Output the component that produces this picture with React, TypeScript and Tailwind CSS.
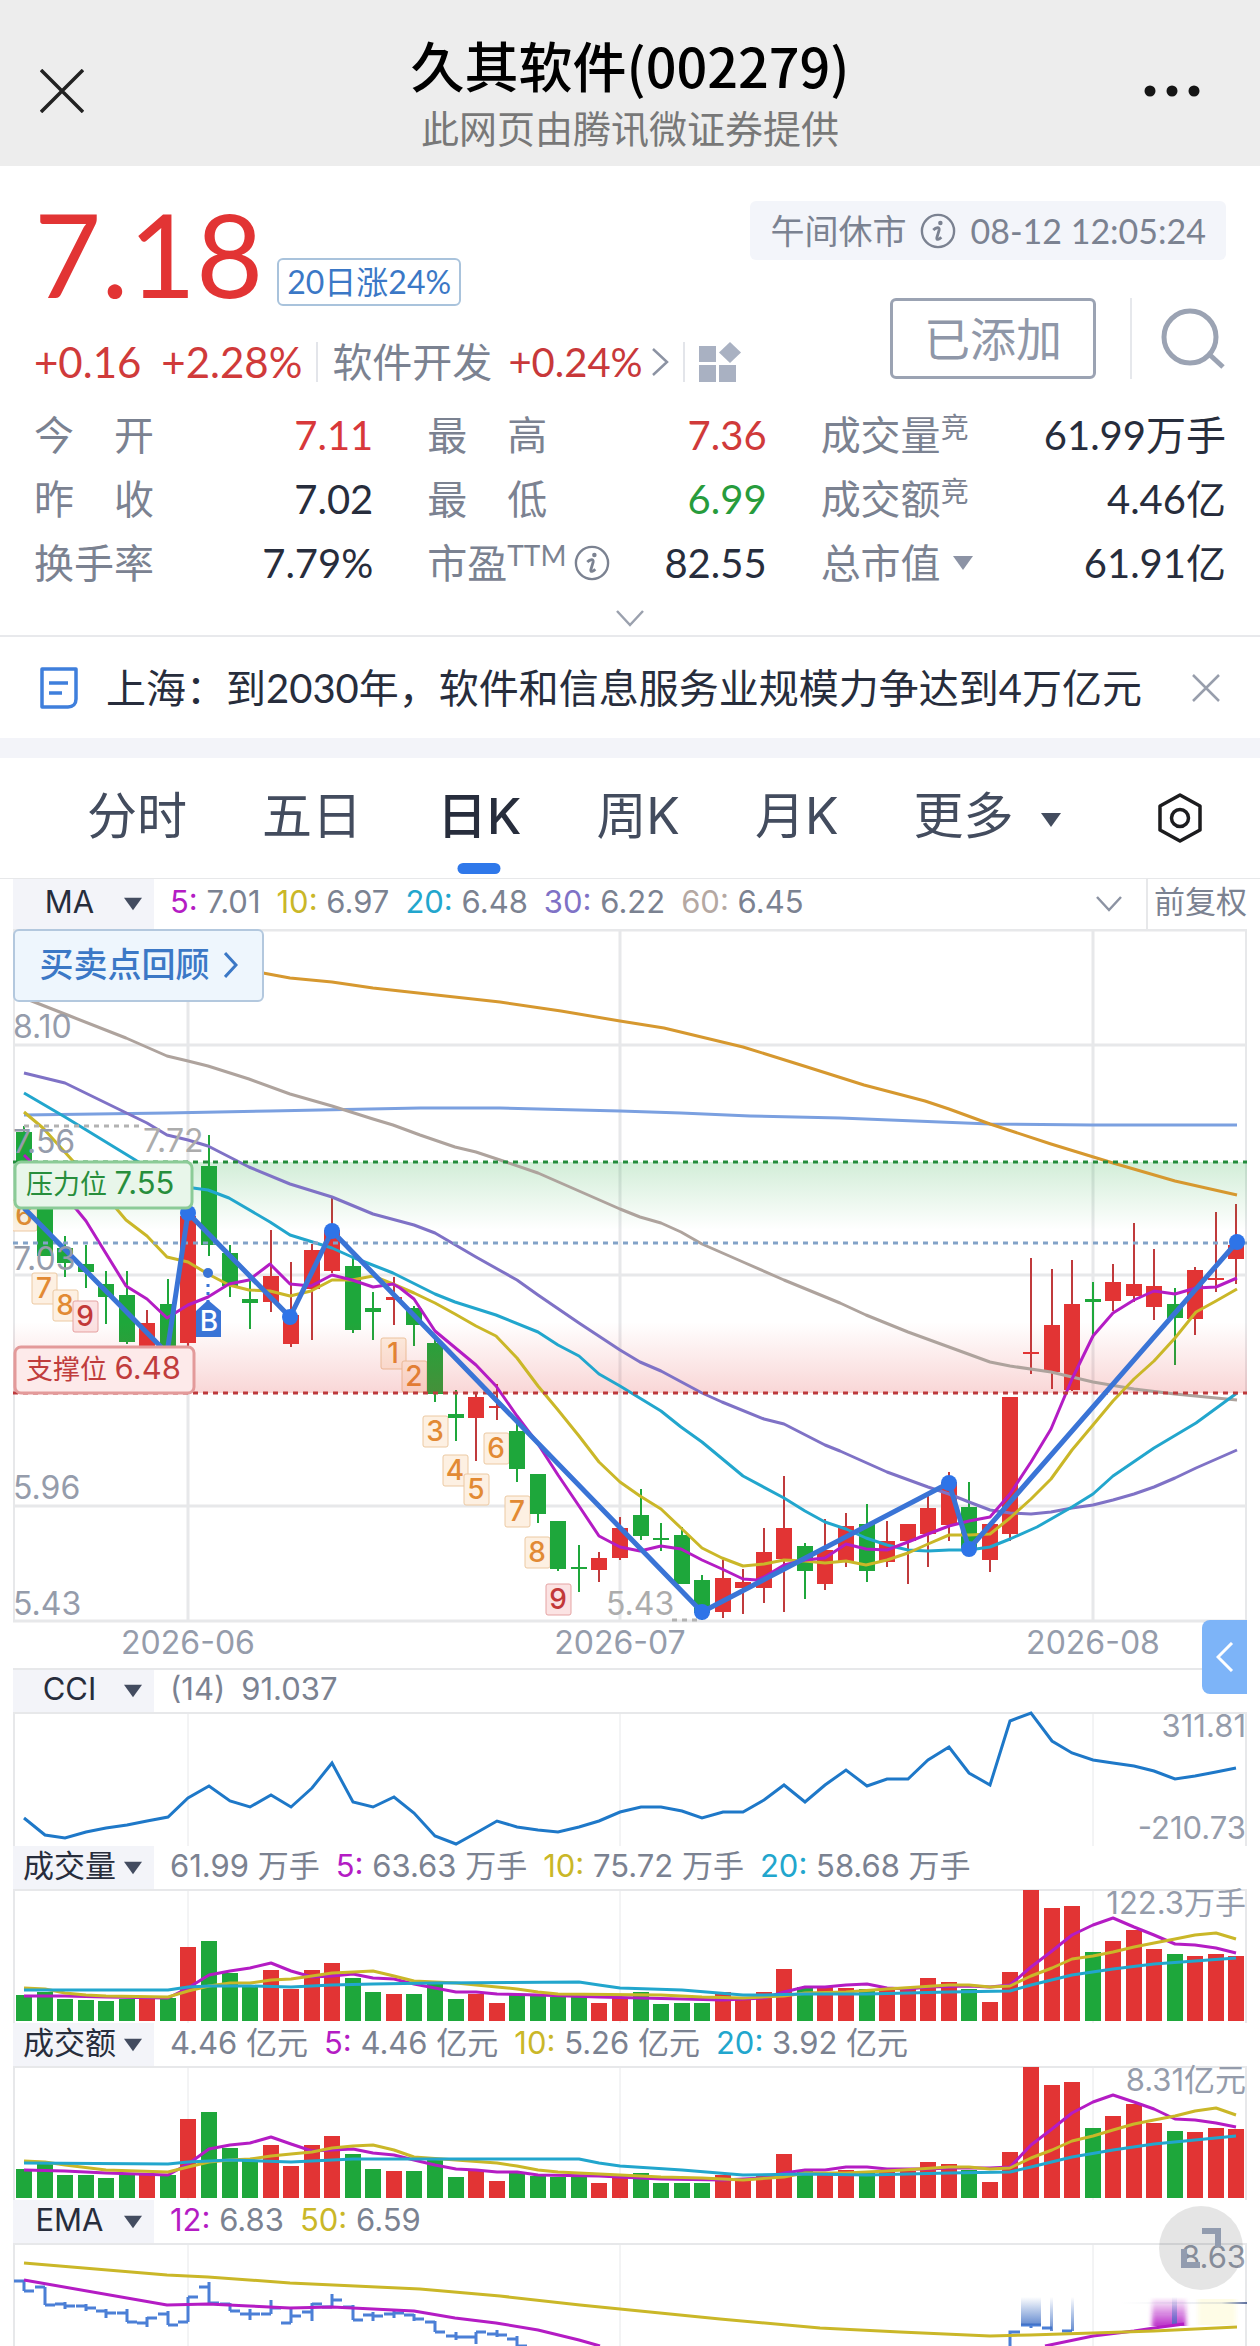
import type { ReactNode } from 'react'
import { clsx } from 'clsx'

const RED = '#e23434'
const GREEN = '#1ea73b'
const MAGENTA = '#b41cc4'
const YELLOW = '#cab728'
const CYAN = '#22a6cd'
const GRID = '#e7e8ea'

type Point = [number, number]

// [rising, high, body top, body bottom, low]
const candles: [number, number, number, number, number][] = [
  [0, 1126, 1132, 1175, 1180], [0, 1187, 1190, 1256, 1256], [0, 1236, 1248, 1263, 1277],
  [0, 1245, 1264, 1272, 1288], [0, 1271, 1284, 1297, 1324], [0, 1271, 1295, 1342, 1344],
  [1, 1310, 1323, 1350, 1350], [0, 1279, 1304, 1350, 1350], [1, 1210, 1216, 1343, 1346],
  [0, 1135, 1166, 1245, 1256], [0, 1245, 1253, 1286, 1297], [0, 1281, 1299, 1303, 1329],
  [1, 1230, 1276, 1302, 1312], [1, 1262, 1315, 1344, 1347], [1, 1244, 1250, 1289, 1340],
  [1, 1197, 1230, 1271, 1273], [0, 1256, 1266, 1330, 1333], [0, 1292, 1308, 1312, 1340],
  [1, 1277, 1297, 1300, 1325], [0, 1306, 1308, 1325, 1346], [0, 1339, 1343, 1394, 1402],
  [0, 1390, 1414, 1418, 1441], [1, 1393, 1397, 1418, 1461], [1, 1384, 1406, 1408, 1420],
  [0, 1418, 1431, 1469, 1482], [0, 1474, 1474, 1514, 1523], [0, 1521, 1521, 1569, 1571],
  [0, 1545, 1567, 1569, 1592], [1, 1552, 1558, 1570, 1582], [1, 1517, 1528, 1558, 1560],
  [0, 1489, 1515, 1536, 1540], [0, 1523, 1538, 1540, 1551], [0, 1527, 1535, 1584, 1584],
  [0, 1575, 1580, 1613, 1620], [1, 1560, 1578, 1612, 1618], [1, 1569, 1582, 1588, 1614],
  [1, 1528, 1552, 1588, 1603], [1, 1476, 1528, 1559, 1612], [0, 1543, 1546, 1571, 1599],
  [1, 1519, 1550, 1584, 1590], [1, 1513, 1526, 1561, 1567], [0, 1504, 1524, 1571, 1582],
  [1, 1521, 1541, 1562, 1567], [1, 1524, 1524, 1541, 1584], [1, 1494, 1508, 1534, 1567],
  [1, 1472, 1482, 1525, 1541], [0, 1482, 1507, 1548, 1552], [1, 1522, 1524, 1560, 1572],
  [1, 1397, 1397, 1534, 1541], [1, 1258, 1352, 1354, 1374], [1, 1269, 1325, 1372, 1389],
  [1, 1260, 1304, 1390, 1391], [0, 1282, 1299, 1302, 1338], [1, 1264, 1282, 1301, 1311],
  [1, 1223, 1284, 1296, 1302], [1, 1249, 1286, 1307, 1320], [0, 1288, 1304, 1318, 1365],
  [1, 1267, 1270, 1319, 1335], [1, 1212, 1278, 1280, 1292], [1, 1204, 1245, 1259, 1284],
]

const priceLines = [
  {
    color: '#7ba0e0',
    points: '24,1115 167,1113 270,1111 420,1108 500,1108 620,1111 681,1113 750,1116 840,1118 990,1124 1092,1125 1237,1125',
  },
  {
    color: '#d6982f',
    points: '24,930 263,973 290,978 332,982 373,988 400,991 500,1002 561,1011 620,1021 664,1028 743,1047 804,1066 864,1085 925,1101 949,1109 990,1124 1051,1144 1113,1163 1175,1181 1237,1195',
  },
  {
    color: '#aea39d',
    points: '24,998 70,1016 126,1038 167,1056 188,1061 208,1066 249,1079 290,1094 332,1106 373,1119 393,1125 420,1135 455,1147 476,1152 503,1161 538,1173 579,1191 620,1209 640,1217 661,1223 681,1232 702,1244 743,1262 784,1280 840,1303 866,1315 908,1332 949,1347 990,1362 1010,1366 1051,1372 1093,1382 1134,1389 1175,1394 1237,1400',
  },
  {
    color: '#7f72c6',
    points: '24,1073 65,1083 147,1123 167,1135 188,1140 208,1146 249,1167 290,1184 332,1197 373,1214 414,1225 435,1233 476,1257 517,1280 538,1295 579,1323 620,1350 640,1362 661,1371 702,1393 722,1402 764,1419 784,1424 825,1445 840,1451 887,1472 928,1487 949,1494 969,1502 990,1510 1010,1513 1031,1514 1051,1512 1072,1508 1093,1505 1113,1500 1134,1494 1154,1487 1175,1478 1196,1468 1237,1450',
  },
  {
    color: CYAN,
    points: '24,1093 65,1117 137,1161 193,1188 208,1190 229,1198 270,1222 290,1235 332,1248 352,1257 393,1273 435,1294 455,1302 496,1315 538,1332 558,1345 579,1356 599,1374 620,1386 661,1411 681,1427 702,1442 743,1476 784,1498 805,1511 825,1522 846,1529 866,1538 887,1545 908,1550 928,1551 949,1550 969,1550 990,1547 1010,1539 1037,1527 1072,1507 1093,1494 1113,1476 1154,1448 1196,1423 1237,1393',
  },
  {
    color: YELLOW,
    points: '24,1112 43,1128 72,1160 115,1207 126,1220 147,1236 167,1257 188,1262 208,1274 229,1285 249,1290 270,1291 290,1296 311,1291 332,1280 352,1280 373,1276 393,1284 414,1293 435,1303 455,1314 476,1326 496,1336 517,1358 538,1386 558,1410 579,1436 599,1462 620,1482 640,1496 661,1509 681,1528 702,1548 722,1558 743,1566 764,1564 784,1560 805,1561 825,1563 846,1561 866,1565 887,1560 908,1553 928,1544 949,1535 969,1535 990,1534 1010,1518 1031,1499 1051,1479 1072,1450 1093,1425 1113,1401 1134,1379 1154,1361 1175,1338 1196,1312 1216,1301 1237,1289',
  },
  {
    color: MAGENTA,
    points: '24,1155 32,1163 77,1210 86,1221 126,1286 147,1299 167,1318 188,1305 208,1297 229,1284 249,1280 270,1264 290,1284 311,1286 332,1275 352,1280 373,1287 393,1284 400,1288 414,1299 435,1331 476,1365 496,1386 517,1416 538,1444 558,1475 579,1506 599,1536 620,1547 640,1551 661,1546 681,1549 702,1560 722,1569 743,1579 757,1580 764,1577 784,1565 805,1560 825,1558 846,1544 866,1549 887,1550 908,1542 928,1534 949,1526 969,1521 990,1517 1010,1494 1031,1462 1051,1429 1072,1379 1093,1336 1113,1313 1134,1300 1154,1291 1175,1294 1196,1288 1216,1287 1237,1278',
  },
]

const swings: Point[] = [[188, 1213], [290, 1317], [332, 1231], [702, 1612], [949, 1483], [969, 1549], [1237, 1242]]

// nine-turn counters under the candles
const counters: [string, number, number][] = [
  ['6', 24, 1215], ['7', 44, 1288], ['8', 65, 1305], ['9', 85, 1316],
  ['1', 393, 1353], ['2', 414, 1376], ['3', 435, 1431], ['4', 455, 1470], ['5', 476, 1489],
  ['6', 496, 1448], ['7', 517, 1511], ['8', 537, 1552], ['9', 558, 1599],
]

const cci = [
  106, 123, 126, 120, 116, 113, 109, 105, 86, 74, 89, 95, 83, 95, 76, 51, 90, 95, 85, 101,
  124, 132, 121, 109, 115, 118, 120, 115, 109, 100, 95, 95, 99, 106, 100, 100, 88, 73, 90, 73,
  58, 74, 67, 67, 48, 35, 61, 73, 9, 1, 29, 41, 48, 51, 54, 59, 67, 64, 60, 56,
]

const volumeBars = [
  26, 29, 22, 21, 20, 22, 22, 23, 74, 80, 48, 34, 51, 32, 51, 58, 43, 29, 27, 27,
  37, 22, 27, 18, 26, 25, 24, 24, 18, 23, 29, 17, 18, 18, 29, 21, 29, 52, 34, 34,
  33, 32, 31, 32, 43, 39, 32, 19, 49, 131, 113, 115, 69, 80, 91, 72, 67, 65, 67, 65,
]

const volumeLines: { color: string; points: Point[] }[] = [
  {
    color: MAGENTA,
    points: [[0, 107], [2, 107], [4, 108], [7, 109], [8, 99], [9, 86], [10, 82], [11, 79], [12, 74], [13, 82], [14, 88], [15, 87], [16, 85], [17, 89], [18, 90], [19, 95], [20, 99], [21, 103], [22, 103], [23, 105], [25, 106], [28, 108], [30, 109], [34, 111], [36, 109], [37, 103], [38, 98], [39, 98], [40, 96], [41, 95], [42, 99], [43, 100], [44, 98], [46, 97], [47, 98], [48, 96], [49, 78], [50, 62], [51, 46], [52, 36], [53, 29], [54, 38], [55, 46], [56, 55], [57, 56], [58, 59], [59, 64]],
  },
  {
    color: YELLOW,
    points: [[0, 99], [1, 100], [2, 104], [3, 106], [4, 107], [7, 108], [8, 102], [9, 97], [10, 94], [11, 94], [12, 91], [13, 90], [14, 87], [15, 84], [16, 83], [17, 82], [18, 87], [19, 92], [20, 93], [21, 94], [22, 96], [23, 98], [24, 100], [25, 103], [26, 105], [31, 106], [33, 108], [35, 109], [37, 107], [38, 104], [40, 103], [42, 100], [45, 96], [46, 96], [47, 98], [48, 97], [49, 87], [50, 79], [51, 70], [52, 67], [53, 63], [54, 58], [55, 54], [56, 50], [57, 46], [58, 44], [59, 50]],
  },
  {
    color: CYAN,
    points: [[0, 101], [7, 101], [8, 98], [9, 97], [11, 97], [13, 98], [15, 96], [17, 95], [20, 94], [27, 93], [28, 96], [29, 99], [32, 101], [35, 106], [36, 106], [38, 105], [41, 105], [45, 103], [48, 102], [49, 96], [51, 86], [53, 80], [55, 75], [57, 72], [59, 69]],
  },
]

const amountBars = [
  29, 35, 23, 23, 20, 24, 23, 23, 79, 86, 50, 38, 53, 32, 53, 62, 44, 29, 27, 27,
  38, 21, 28, 17, 25, 22, 21, 21, 15, 20, 25, 15, 15, 15, 23, 18, 22, 44, 27, 26,
  28, 27, 26, 27, 36, 34, 28, 16, 46, 131, 113, 116, 70, 82, 94, 75, 67, 66, 70, 69,
]

const amountLines: { color: string; points: Point[] }[] = [
  {
    color: MAGENTA,
    points: [[0, 104], [2, 105], [4, 107], [7, 109], [8, 98], [9, 83], [10, 79], [11, 77], [12, 71], [13, 78], [14, 85], [15, 84], [16, 83], [17, 87], [18, 89], [19, 94], [20, 99], [21, 103], [22, 104], [23, 106], [24, 106], [25, 109], [28, 110], [31, 113], [34, 114], [36, 112], [37, 107], [38, 104], [39, 104], [40, 101], [41, 101], [42, 103], [44, 103], [45, 102], [47, 102], [48, 101], [49, 79], [50, 63], [51, 47], [52, 36], [53, 29], [54, 36], [55, 43], [56, 53], [57, 54], [58, 57], [59, 61]],
  },
  {
    color: YELLOW,
    points: [[0, 95], [1, 96], [2, 99], [4, 104], [7, 106], [8, 101], [9, 96], [10, 94], [11, 93], [12, 90], [13, 88], [14, 86], [15, 82], [16, 80], [17, 79], [18, 84], [19, 91], [21, 94], [23, 97], [24, 100], [25, 104], [26, 106], [29, 109], [31, 111], [33, 112], [35, 114], [37, 111], [38, 107], [40, 107], [42, 105], [45, 101], [46, 101], [47, 103], [48, 102], [49, 92], [50, 84], [51, 75], [52, 70], [53, 64], [54, 58], [55, 54], [56, 50], [57, 45], [58, 42], [59, 49]],
  },
  {
    color: CYAN,
    points: [[0, 97], [7, 98], [8, 96], [10, 94], [13, 96], [16, 93], [27, 93], [28, 97], [29, 100], [32, 104], [35, 109], [38, 108], [41, 109], [45, 107], [48, 106], [49, 101], [51, 91], [53, 84], [55, 78], [57, 74], [59, 70]],
  },
]

// [open, high, low, close] for the EMA panel
const emaBars = [
  [38, 37, 48, 48], [44, 44, 62, 62], [61, 59, 66, 63], [63, 61, 68, 65], [68, 66, 75, 70],
  [70, 66, 79, 79], [80, 74, 84, 75], [71, 68, 82, 82], [79, 54, 79, 54], [44, 39, 60, 60],
  [61, 60, 68, 68], [71, 66, 77, 71], [71, 57, 71, 65], [80, 64, 80, 73], [69, 60, 78, 61],
  [64, 51, 65, 57], [64, 62, 77, 77], [72, 69, 78, 73], [71, 67, 75, 70], [72, 71, 78, 76],
  [79, 78, 89, 89], [93, 89, 97, 94], [94, 89, 101, 89], [91, 87, 94, 92], [96, 93, 103, 103],
]

const x = (i: number) => Math.round(24 + i * 20.55)
const toPoints = (list: Point[]) => list.map(([i, y]) => `${x(i)},${y}`).join(' ')

function Triangle({ className }: { className: string }) {
  return (
    <svg viewBox="0 0 20 14" className={clsx('pointer-events-none absolute top-1/2 -translate-y-1/2 fill-current', className)}>
      <path d="M0 0H20L10 14Z" />
    </svg>
  )
}

function InfoIcon() {
  return (
    <svg viewBox="0 0 38 38" className="h-9 w-9 shrink-0" fill="none" stroke="currentColor" strokeWidth="2.5">
      <circle cx="19" cy="19" r="17" />
      <circle cx="21.500" cy="10.500" r="2.400" fill="currentColor" stroke="none" />
      <path d="M14 18C17 15 21 14.500 20.200 18L17.800 26C17.200 29 20 28 22.500 25.500" strokeWidth="3" />
    </svg>
  )
}

function IndicatorSelect({ name, options }: { name: string; options: string[] }) {
  return (
    <div className="relative w-[141px] shrink-0 self-stretch bg-[#f3f4f9] text-[#434c60]">
      <select aria-label={name} className="block h-full w-full appearance-none pr-7 pb-1 text-center text-[31px] leading-9 text-[#272d3c]">
        {options.map((o) => (
          <option key={o}>{o}</option>
        ))}
      </select>
      <Triangle className="right-3 h-3.5 w-[18px]" />
    </div>
  )
}

function Legend({ items }: { items: { label?: string; value: string; tone?: string }[] }) {
  return (
    <div className="flex items-center gap-4 pb-1 pl-4 text-[31px] leading-9 whitespace-nowrap text-[#7b8291]">
      {items.map((item) => (
        <span key={item.label ?? item.value}>
          {item.label && <span className={item.tone}>{item.label}: </span>}
          {item.value}
        </span>
      ))}
    </div>
  )
}

function PanelHead({ children }: { children: ReactNode }) {
  return <div className="flex h-[43px] items-center">{children}</div>
}

function PanelGrid({ height }: { height: number }) {
  return (
    <g stroke={GRID} strokeWidth="2">
      <path d={`M13 1H1247M14 0V${height}M1246 0V${height}`} />
      <path d={`M188 0V${height}M620 0V${height}M1093 0V${height}`} strokeWidth="1" />
    </g>
  )
}

function PriceChart() {
  return (
    <svg viewBox="13 929 1234 739" className="block w-full" role="img" aria-label="日K">
      <defs>
        <linearGradient id="pressure" x1="0" y1="0" x2="0" y2="1">
          <stop offset="0" stopColor="#1ea73b" stopOpacity="0.2" />
          <stop offset="1" stopColor="#1ea73b" stopOpacity="0" />
        </linearGradient>
        <linearGradient id="support" x1="0" y1="0" x2="0" y2="1">
          <stop offset="0" stopColor="#e23434" stopOpacity="0" />
          <stop offset="1" stopColor="#e23434" stopOpacity="0.2" />
        </linearGradient>
      </defs>

      <path
        d="M13 930H1247M13 1045H1247M13 1275H1247M13 1506H1247M13 1621H1247M188 930V1621M620 930V1621M1093 930V1621"
        stroke={GRID}
        strokeWidth="3"
      />
      <path d="M14 930V1621M1246 930V1621" stroke={GRID} strokeWidth="2" />

      {counters.map(([n, cx, cy]) => (
        <g key={`${n}-${cx}`}>
          <rect x={cx - 12} y={cy - 15} width="25" height="31" rx="2" fill={n === '9' ? '#fbe3e3' : '#fdf0e2'} stroke={n === '9' ? '#e5a3a3' : '#ecc9a2'} />
          <text x={cx} y={cy + 10} textAnchor="middle" fontSize="28" fontWeight="500" fill={n === '9' ? '#c23838' : '#e28a34'}>{n}</text>
        </g>
      ))}

      {candles.map(([up, high, top, bottom, low], i) => (
        <g key={i} fill={up ? RED : GREEN} stroke={up ? '#c03a3c' : GREEN}>
          <path d={`M${x(i)} ${high}V${low}`} strokeWidth="2" />
          <rect x={x(i) - 8} y={top} width="16" height={bottom - top} stroke="none" />
        </g>
      ))}

      <rect x="13" y="1162" width="1234" height="68" fill="url(#pressure)" />
      <rect x="13" y="1322" width="1234" height="71" fill="url(#support)" />

      {priceLines.map((l) => (
        <polyline key={l.color} points={l.points} fill="none" stroke={l.color} strokeWidth="3" strokeLinejoin="round" />
      ))}

      <g fill="none" strokeWidth="3" strokeDasharray="5 5">
        <path d="M13 1162H1247" stroke="#238c3c" />
        <path d="M13 1243H1247" stroke="#83a3c8" />
        <path d="M13 1393H1247" stroke="#bd3a3c" />
        <path d="M24 1126H144M672 1620H700" stroke="#b2b2b2" />
      </g>

      <polyline points="24,1208 167,1353 188,1213 290,1317 332,1231 702,1612 949,1483 969,1549 1237,1242" fill="none" stroke="#3a74d6" strokeWidth="5" strokeLinejoin="round" />
      {swings.map(([cx, cy]) => (
        <circle key={cx} cx={cx} cy={cy} r="8" fill="#2e74e8" />
      ))}

      {/* buy marker */}
      <circle cx="208" cy="1273" r="5" fill="#3a74d6" />
      <path d="M208 1284V1302" stroke="#3a74d6" strokeWidth="3" strokeDasharray="3 5" />
      <path d="M208 1300L221 1311V1337H196V1311Z" fill="#3a74d6" />
      <text x="209" y="1331" textAnchor="middle" fontSize="28" fontWeight="500" fill="#fff">B</text>

      <g fontSize="32" fill="#959cab">
        <text x="13" y="1038">8.10</text>
        <text x="13" y="1153">7.56</text>
        <text x="13" y="1270">7.03</text>
        <text x="13" y="1499">5.96</text>
        <text x="13" y="1615">5.43</text>
        <text x="143" y="1152" fill="#acacac">7.72</text>
        <text x="606" y="1615" fill="#acacac">5.43</text>
        <text x="188" y="1654" textAnchor="middle">2026-06</text>
        <text x="620" y="1654" textAnchor="middle">2026-07</text>
        <text x="1093" y="1654" textAnchor="middle">2026-08</text>
      </g>

      <g fontSize="27" strokeWidth="3">
        <rect x="15" y="1162" width="177" height="46" rx="6" fill="#e8f6ea" stroke="#8bcb97" />
        <text x="26" y="1194" fill="#278e3c">压力位 <tspan fontSize="31">7.55</tspan></text>
        <rect x="15" y="1347" width="179" height="46" rx="6" fill="#fdeaea" stroke="#e39a9a" />
        <text x="26" y="1379" fill="#c03c3c">支撑位 <tspan fontSize="31">6.48</tspan></text>
      </g>
    </svg>
  )
}

function CciChart() {
  return (
    <svg viewBox="13 0 1234 134" className="block w-full overflow-visible" role="img" aria-label="CCI">
      <PanelGrid height={134} />
      <polyline points={toPoints(cci.map((y, i) => [i, y]))} fill="none" stroke="#1e78c8" strokeWidth="3" />
      <g fontSize="31" fill="#959cab" textAnchor="end">
        <text x="1246" y="25">311.81</text>
        <text x="1246" y="127">-210.73</text>
      </g>
    </svg>
  )
}

function BarChart({ label, bars, lines, max }: { label: string; bars: number[]; lines: { color: string; points: Point[] }[]; max: string }) {
  return (
    <svg viewBox="13 0 1234 134" className="block w-full overflow-visible" role="img" aria-label={label}>
      <PanelGrid height={134} />
      {bars.map((h, i) => (
        <rect key={i} x={x(i) - 8} y={132 - h} width="16" height={h} fill={candles[i][0] ? RED : GREEN} />
      ))}
      {lines.map((l) => (
        <polyline key={l.color} points={toPoints(l.points)} fill="none" stroke={l.color} strokeWidth="3" strokeLinejoin="round" />
      ))}
      <text x="1246" y="25" fontSize="31" fill="#959cab" textAnchor="end">{max}</text>
    </svg>
  )
}

function EmaChart() {
  return (
    <svg viewBox="13 0 1234 103" className="block w-full overflow-visible" role="img" aria-label="EMA">
      <defs>
        <linearGradient id="blueFade" x1="0" y1="0" x2="0" y2="1">
          <stop offset="0" stopColor="#3f6fc4" stopOpacity="0" />
          <stop offset="1" stopColor="#3f6fc4" stopOpacity="0.8" />
        </linearGradient>
        <linearGradient id="magentaFade" x1="0" y1="0" x2="0" y2="1">
          <stop offset="0" stopColor="#b41cc4" stopOpacity="0" />
          <stop offset="1" stopColor="#b41cc4" stopOpacity="0.9" />
        </linearGradient>
        <linearGradient id="lineFade" x1="0" y1="0" x2="1" y2="0">
          <stop offset="0" stopColor="#5c6f9c" stopOpacity="0" />
          <stop offset="0.8" stopColor="#5c6f9c" stopOpacity="0.15" />
          <stop offset="1" stopColor="#5c6f9c" />
        </linearGradient>
        <filter id="soft" x="-20%" y="-5%" width="140%" height="110%">
          <feGaussianBlur stdDeviation="2 0" />
        </filter>
      </defs>
      <PanelGrid height={103} />
      <g stroke="#4b7fd6" strokeWidth="3" fill="none">
        {emaBars.map(([open, high, low, close], i) => (
          <path key={i} d={`M${x(i) - 10} ${open}H${x(i)}M${x(i)} ${high}V${low}M${x(i)} ${close}H${x(i) + 10}`} />
        ))}
        <path d="M1010 103V89H1020M1021 82H1041M1031 82V85M1042 85H1052M1062 88H1072" />
      </g>
      <rect x="1021" y="54" width="20" height="28" fill="url(#blueFade)" />
      <rect x="1050" y="54" width="3" height="34" fill="url(#blueFade)" />
      <rect x="1071" y="54" width="3" height="34" fill="url(#blueFade)" />
      <rect x="1152" y="54" width="34" height="29" fill="url(#magentaFade)" filter="url(#soft)" />
      <rect x="1172" y="54" width="5" height="28" fill="url(#blueFade)" />
      <rect x="1198" y="56" width="38" height="26" fill="#fdf9c8" opacity="0.45" filter="url(#soft)" />
      <rect x="1120" y="59" width="127" height="2" fill="url(#lineFade)" />
      <g fill="none" strokeWidth="3" strokeLinejoin="round">
        <polyline points="24,37 167,62 208,61 249,63 290,65 332,64 414,68 455,75 496,80 538,87 579,97 600,103" stroke={MAGENTA} />
        <polyline points="1045,103 1093,93 1134,88 1154,85 1184,81" stroke={MAGENTA} />
        <polyline points="24,20 167,32 208,34 290,40 420,46 500,53 580,62 640,68 720,76 820,85 900,89 990,93 1030,92 1093,90 1154,88 1237,84" stroke={YELLOW} />
      </g>
      <text x="1246" y="25" fontSize="31" fill="#959cab" textAnchor="end">8.63</text>
    </svg>
  )
}

function Stat({ label, value, tone = 'text-[#272d3c]' }: { label: ReactNode; value: string; tone?: string }) {
  return (
    <div className="flex h-16 items-center justify-between text-[40px] whitespace-nowrap">
      <dt className="flex items-center text-[#7b8291]">{label}</dt>
      <dd className={tone}>{value}</dd>
    </div>
  )
}

function Spaced({ a, b }: { a: string; b: string }) {
  return (
    <span className="flex w-[120px] justify-between">
      <span>{a}</span>
      <span>{b}</span>
    </span>
  )
}

function Raised({ children }: { children: string }) {
  return <sup className="static pb-4 text-[28px] leading-none">{children}</sup>
}

const tabs = ['分时', '五日', '日K', '周K', '月K']

export default function App() {
  return (
    <div className="w-full overflow-hidden bg-white font-['Inter','Noto_Sans_CJK_SC',sans-serif] text-[#272d3c]">
      <header className="grid h-[166px] grid-cols-[1fr_auto_1fr] items-center bg-[#ededed] px-10">
        <button aria-label="关闭" className="justify-self-start pt-4">
          <svg viewBox="0 0 44 44" className="h-11 w-11" stroke="#222" strokeWidth="3.5" fill="none">
            <path d="M1 1L43 43M43 1L1 43" />
          </svg>
        </button>
        <div className="pt-5 text-center font-['Noto_Sans_CJK_SC',sans-serif]">
          <h1 className="text-[54px] leading-[68px] font-medium text-black">久其软件(002279)</h1>
          <p className="text-[38px] leading-[56px] text-[#787878]">此网页由腾讯微证券提供</p>
        </div>
        <button aria-label="更多操作" className="justify-self-end pt-4 pr-5">
          <svg viewBox="0 0 56 12" className="h-3 w-14" fill="#151515">
            <circle cx="6" cy="6" r="5.500" />
            <circle cx="28" cy="6" r="5.500" />
            <circle cx="50" cy="6" r="5.500" />
          </svg>
        </button>
      </header>

      <section className="px-[34px] pt-[35px] font-['Lato','Noto_Sans_CJK_SC',sans-serif]">
        <div className="flex justify-between">
          <div>
            <div className="flex h-[105px] items-end gap-3.5">
              <span className="text-[116px] leading-[105px] text-[#e23434]">7.18</span>
              <span className="flex h-12 items-center rounded-md border-2 border-[#a9c3dc] px-2 text-[32px] text-[#3b78c6]">20日涨24%</span>
            </div>
            <div className="mt-[34px] flex h-11 items-center text-[42px] whitespace-nowrap">
              <span className="text-[#d03a3a]">+0.16</span>
              <span className="ml-5 text-[#d03a3a]">+2.28%</span>
              <a href="#sector" className="ml-3.5 flex items-center border-l-2 border-[#e3e5ea] pl-3.5 text-[40px] leading-10 text-[#7b8291]">
                软件开发
                <span className="ml-4 text-[#c8383a]">+0.24%</span>
                <svg viewBox="0 0 18 28" className="ml-2 h-7 w-[18px]" fill="none" stroke="#8c93a3" strokeWidth="2.500">
                  <path d="M2 1L16 14L2 27" />
                </svg>
              </a>
              <button aria-label="板块" className="ml-3.5 border-l-2 border-[#e3e5ea] pl-3.5">
                <svg viewBox="0 0 42 40" className="h-10 w-[42px]" fill="#a9b1c2">
                  <rect x="0" y="4" width="17" height="16" />
                  <path d="M31 0L42 10.500L31 21L20 10.500Z" />
                  <rect x="0" y="23" width="17" height="17" />
                  <rect x="20" y="23" width="17" height="17" />
                </svg>
              </button>
            </div>
          </div>

          <div className="flex flex-col items-end">
            <div className="flex h-[59px] items-center gap-3.5 rounded-md bg-[#f3f5fa] px-5 text-[34px] whitespace-nowrap text-[#7b8291]">
              午间休市
              <InfoIcon />
              <time>08-12 12:05:24</time>
            </div>
            <div className="mt-[38px] flex h-[81px] items-center">
              <button className="h-full w-[206px] rounded-md border-[3px] border-[#9ba3b3] text-[46px] text-[#8f97a8]">已添加</button>
              <span className="ml-[34px] h-full w-0.5 bg-[#e6e8ec]" />
              <button aria-label="搜索" className="ml-7">
                <svg viewBox="0 0 66 62" className="h-[62px] w-[66px]" fill="none" stroke="#9ba3b3" strokeWidth="5">
                  <circle cx="30" cy="29" r="26" />
                  <path d="M50 47L63 59" />
                </svg>
              </button>
            </div>
          </div>
        </div>

        <dl className="mt-[19px] grid grid-cols-[339fr_339fr_405fr] gap-x-[54px]">
          <Stat label={<Spaced a="今" b="开" />} value="7.11" tone="text-[#d8383a]" />
          <Stat label={<Spaced a="最" b="高" />} value="7.36" tone="text-[#d03a3a]" />
          <Stat label={<>成交量<Raised>竞</Raised></>} value="61.99万手" />
          <Stat label={<Spaced a="昨" b="收" />} value="7.02" />
          <Stat label={<Spaced a="最" b="低" />} value="6.99" tone="text-[#279c3c]" />
          <Stat label={<>成交额<Raised>竞</Raised></>} value="4.46亿" />
          <Stat label="换手率" value="7.79%" />
          <Stat label={<>市盈<Raised>TTM</Raised><span className="ml-2"><InfoIcon /></span></>} value="82.55" />
          <Stat
            label={
              <span className="relative text-[#8c93a5]">
                <select aria-label="市值" className="appearance-none pr-8 text-[#7b8291]">
                  <option>总市值</option>
                  <option>流通值</option>
                </select>
                <Triangle className="right-0 h-3.5 w-5" />
              </span>
            }
            value="61.91亿"
          />
        </dl>
        <button aria-label="展开" className="flex h-10 w-full items-center justify-center pt-1.5">
          <svg viewBox="0 0 28 18" className="h-[18px] w-7" fill="none" stroke="#9ba1ae" strokeWidth="2.500">
            <path d="M1 2L14 16L27 2" />
          </svg>
        </button>
      </section>

      <section className="flex h-[103px] items-center border-t-2 border-[#e8e9ec] px-10 font-['Lato','Noto_Sans_CJK_SC',sans-serif]">
        <svg viewBox="0 0 38 42" className="h-[42px] w-[38px] shrink-0" fill="none" stroke="#3f7fdc" strokeWidth="3.500">
          <path d="M2 2H36V32C36 37 33 40 28 40H2Z" strokeLinejoin="round" />
          <path d="M9 16H28M9 26H22" />
        </svg>
        <a href="#news" className="ml-7 min-w-0 flex-1 truncate text-[40px]">上海：到2030年，软件和信息服务业规模力争达到4万亿元</a>
        <button aria-label="关闭资讯" className="ml-4">
          <svg viewBox="0 0 28 28" className="h-7 w-7" fill="none" stroke="#989eac" strokeWidth="2.500">
            <path d="M1 1L27 27M27 1L1 27" />
          </svg>
        </button>
      </section>
      <div className="h-5 bg-[#f3f4f9]" />

      <nav className="flex h-[121px] items-start border-b border-[#e7e8ea] pr-[58px] pl-[87px] text-[50px] text-[#434c5e]">
        <div className="flex gap-[75px]">
          {tabs.map((t) => (
            <button key={t} className={clsx('relative h-[116px]', t === '日K' && 'font-medium text-[#272d3c]')}>
              {t}
              {t === '日K' && <span className="absolute bottom-0 left-1/2 h-[11px] w-[43px] -translate-x-1/2 rounded-full bg-[#2f78ea]" />}
            </button>
          ))}
          <div className="relative h-[116px]">
            <select aria-label="更多周期" className="h-full appearance-none pr-12">
              <option>更多</option>
              <option>5分</option>
            </select>
            <Triangle className="right-0 mt-1 h-3.5 w-[22px]" />
          </div>
        </div>
        <button aria-label="设置" className="ml-auto h-[120px]">
          <svg viewBox="0 0 44 50" className="h-[50px] w-11" fill="none" stroke="#1c1c1e" strokeWidth="3.500">
            <path d="M22 2L42 13V37L22 48L2 37V13Z" strokeLinejoin="round" />
            <circle cx="22" cy="25" r="8.500" />
          </svg>
        </button>
      </nav>

      <main className="relative px-[13px]">
        <div className="flex h-[50px] items-center">
          <IndicatorSelect name="主图指标" options={['MA', 'BOLL']} />
          <Legend
            items={[
              { label: '5', value: '7.01', tone: 'text-[#b41cc4]' },
              { label: '10', value: '6.97', tone: 'text-[#cab728]' },
              { label: '20', value: '6.48', tone: 'text-[#22a6cd]' },
              { label: '30', value: '6.22', tone: 'text-[#7f72c6]' },
              { label: '60', value: '6.45', tone: 'text-[#b5a8a2]' },
            ]}
          />
          <button aria-label="展开均线" className="ml-auto">
            <svg viewBox="0 0 26 16" className="h-4 w-[26px]" fill="none" stroke="#8c93a3" strokeWidth="2.500">
              <path d="M1 1L13 14L25 1" />
            </svg>
          </button>
          <button className="ml-6 h-full border-l-2 border-[#e7e8ea] pb-1 pl-1.5 text-[31px] text-[#7b8291]">前复权</button>
        </div>

        <div className="relative">
          <PriceChart />
          <button className="absolute top-0 left-0 flex h-[73px] w-[251px] items-center justify-center gap-3.5 rounded-md border-2 border-[#b3c8de] bg-[#eef6fd] pb-0.5 text-[34px] font-medium text-[#3b78c6]">
            买卖点回顾
            <svg viewBox="0 0 14 26" className="h-[26px] w-3.5" fill="none" stroke="currentColor" strokeWidth="3">
              <path d="M1 1L12 13L1 25" />
            </svg>
          </button>
          <button aria-label="展开侧栏" className="absolute right-0 -bottom-[26px] flex h-[74px] w-[45px] items-center justify-center rounded-l-lg bg-[#7db4f8]">
            <svg viewBox="0 0 18 30" className="h-[30px] w-[18px]" fill="none" stroke="#fff" strokeWidth="3">
              <path d="M16 1L2 15L16 29" />
            </svg>
          </button>
        </div>

        <div className="flex h-11 items-center border-t-2 border-[#e7e8ea]">
          <IndicatorSelect name="副图一" options={['CCI', 'MACD']} />
          <Legend items={[{ value: '(14)' }, { value: '91.037' }]} />
        </div>
        <CciChart />

        <PanelHead>
          <IndicatorSelect name="副图二" options={['成交量', 'KDJ']} />
          <Legend
            items={[
              { value: '61.99 万手' },
              { label: '5', value: '63.63 万手', tone: 'text-[#b41cc4]' },
              { label: '10', value: '75.72 万手', tone: 'text-[#cab728]' },
              { label: '20', value: '58.68 万手', tone: 'text-[#22a6cd]' },
            ]}
          />
        </PanelHead>
        <BarChart label="成交量" bars={volumeBars} lines={volumeLines} max="122.3万手" />

        <PanelHead>
          <IndicatorSelect name="副图三" options={['成交额', 'RSI']} />
          <Legend
            items={[
              { value: '4.46 亿元' },
              { label: '5', value: '4.46 亿元', tone: 'text-[#b41cc4]' },
              { label: '10', value: '5.26 亿元', tone: 'text-[#cab728]' },
              { label: '20', value: '3.92 亿元', tone: 'text-[#22a6cd]' },
            ]}
          />
        </PanelHead>
        <BarChart label="成交额" bars={amountBars} lines={amountLines} max="8.31亿元" />

        <div className="relative">
          <PanelHead>
            <IndicatorSelect name="副图四" options={['EMA', 'WR']} />
            <Legend
              items={[
                { label: '12', value: '6.83', tone: 'text-[#b41cc4]' },
                { label: '50', value: '6.59', tone: 'text-[#cab728]' },
              ]}
            />
          </PanelHead>
          <EmaChart />
          <button aria-label="全屏" className="absolute top-1.5 right-1 flex size-[84px] items-center justify-center rounded-full bg-black/10">
            <svg viewBox="0 0 42 42" className="h-[42px] w-[42px]" fill="none" stroke="#929caf" strokeWidth="6">
              <path d="M22 4H38V20M4 22V38H20" />
            </svg>
          </button>
        </div>
      </main>
    </div>
  )
}
